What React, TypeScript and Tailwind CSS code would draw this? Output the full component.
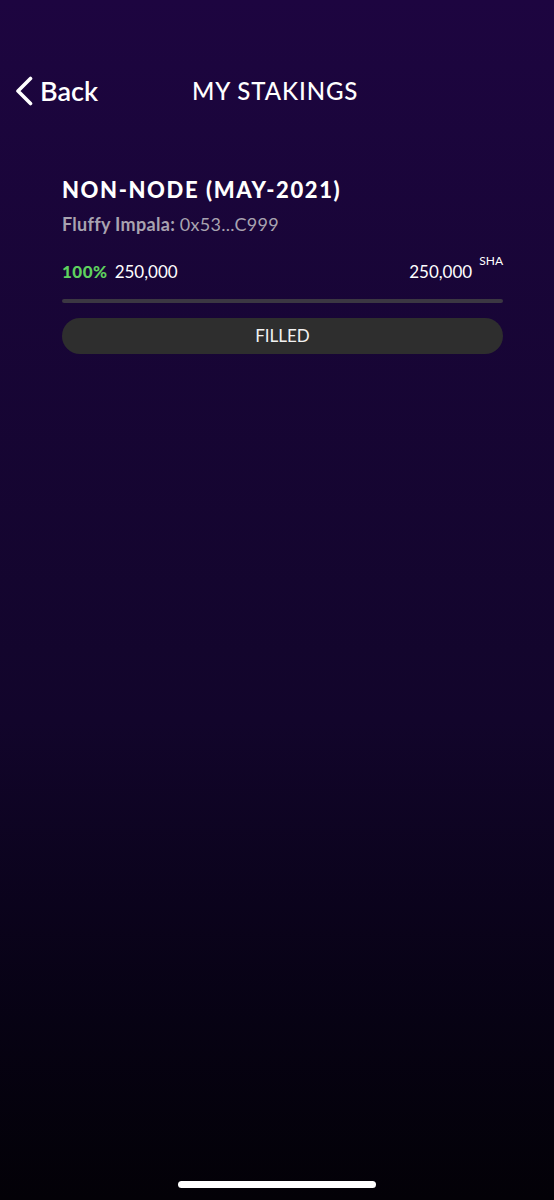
const App = () => {
  return (
    <div
      className="w-[554px] h-[1200px] flex flex-col bg-gradient-to-b from-[#1d0540] via-[#12052b] via-60% to-[#030107] text-white"
      style={{ fontFamily: "Lato, 'Open Sans', sans-serif" }}
    >
      <header className="flex items-center h-[48px] mt-[67px] pl-[14px]">
        <button className="flex items-center gap-[6px]">
          <svg width="20" height="30" viewBox="0 0 20 30" fill="none">
            <path d="M16.5 2.5 L4 15 L16.5 27.5" stroke="white" strokeWidth="3.6" strokeLinecap="round" strokeLinejoin="round" />
          </svg>
          <span className="text-[27px] font-semibold">Back</span>
        </button>
        <h1 className="ml-[94px] text-[24px] font-medium tracking-[0.9px]">MY STAKINGS</h1>
      </header>

      <section className="ml-[62px] w-[441px] mt-[61px] flex flex-col">
        <h2 className="text-[22px] font-black tracking-[1.6px] leading-[28px]">NON-NODE (MAY-2021)</h2>
        <div className="mt-[9px] text-[18px] leading-[22px] tracking-[0.3px] text-[#a8a3b0]">
          <span className="font-bold">Fluffy Impala: </span>
          <span>0x53...C999</span>
        </div>

        <div className="mt-[26px] flex items-end justify-between text-[17px] leading-[22px]">
          <div className="flex items-center gap-[7px]">
            <span className="font-black text-[#5ed15e] tracking-[0.5px]">100%</span>
            <span>250,000</span>
          </div>
          <div className="flex items-start">
            <span>250,000</span>
            <span className="ml-[7px] text-[12px] leading-[12px] -mt-[6px]">SHA</span>
          </div>
        </div>

        <div className="mt-[16px] h-[4px] rounded-full bg-[#3b3742]" />

        <button className="mt-[15px] h-[36px] rounded-full bg-[#2e2e2e] text-[17px] text-[#f2f2f2] flex items-center justify-center">
          FILLED
        </button>
      </section>

      <div className="mt-auto mb-[12px] flex justify-center">
        <div className="w-[198px] h-[7px] rounded-full bg-white" />
      </div>
    </div>
  );
};

export default App;
